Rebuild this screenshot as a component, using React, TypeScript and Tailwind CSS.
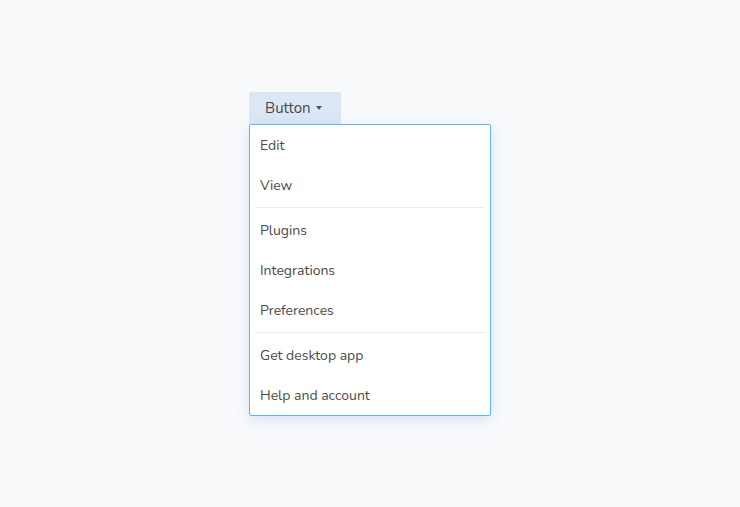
import React from "react";

const Divider = () => (
  <div className="py-[2px] px-[5px]">
    <div className="h-px bg-[#ececec]" />
  </div>
);

const Item = ({ label }: { label: string }) => (
  <div className="h-10 flex items-center px-[10px] text-[14px] text-[#4a4a4a]">{label}</div>
);

export default function App() {
  return (
    <div
      className="w-[740px] h-[507px] bg-[#f9fafc] pt-[92px] pl-[249px]"
      style={{ fontFamily: "Nunito, Lato, 'Noto Sans', sans-serif" }}
    >
      <div className="flex flex-col items-start">
        <button className="h-8 w-[92px] flex items-center pl-4 gap-[5px] bg-[#dce7f5] rounded-t-[2px] text-[15px] text-[#4a4a4a]">
          Button
          <span className="w-0 h-0 border-l-[3.5px] border-r-[3.5px] border-t-[4px] border-l-transparent border-r-transparent border-t-[#555]" />
        </button>
        <div className="w-[242px] bg-white border border-[#5db4fc] rounded-[2px] shadow-[0_4px_16px_rgba(100,140,200,0.22)]">
          <Item label="Edit" />
          <Item label="View" />
          <Divider />
          <Item label="Plugins" />
          <Item label="Integrations" />
          <Item label="Preferences" />
          <Divider />
          <Item label="Get desktop app" />
          <Item label="Help and account" />
        </div>
      </div>
    </div>
  );
}
